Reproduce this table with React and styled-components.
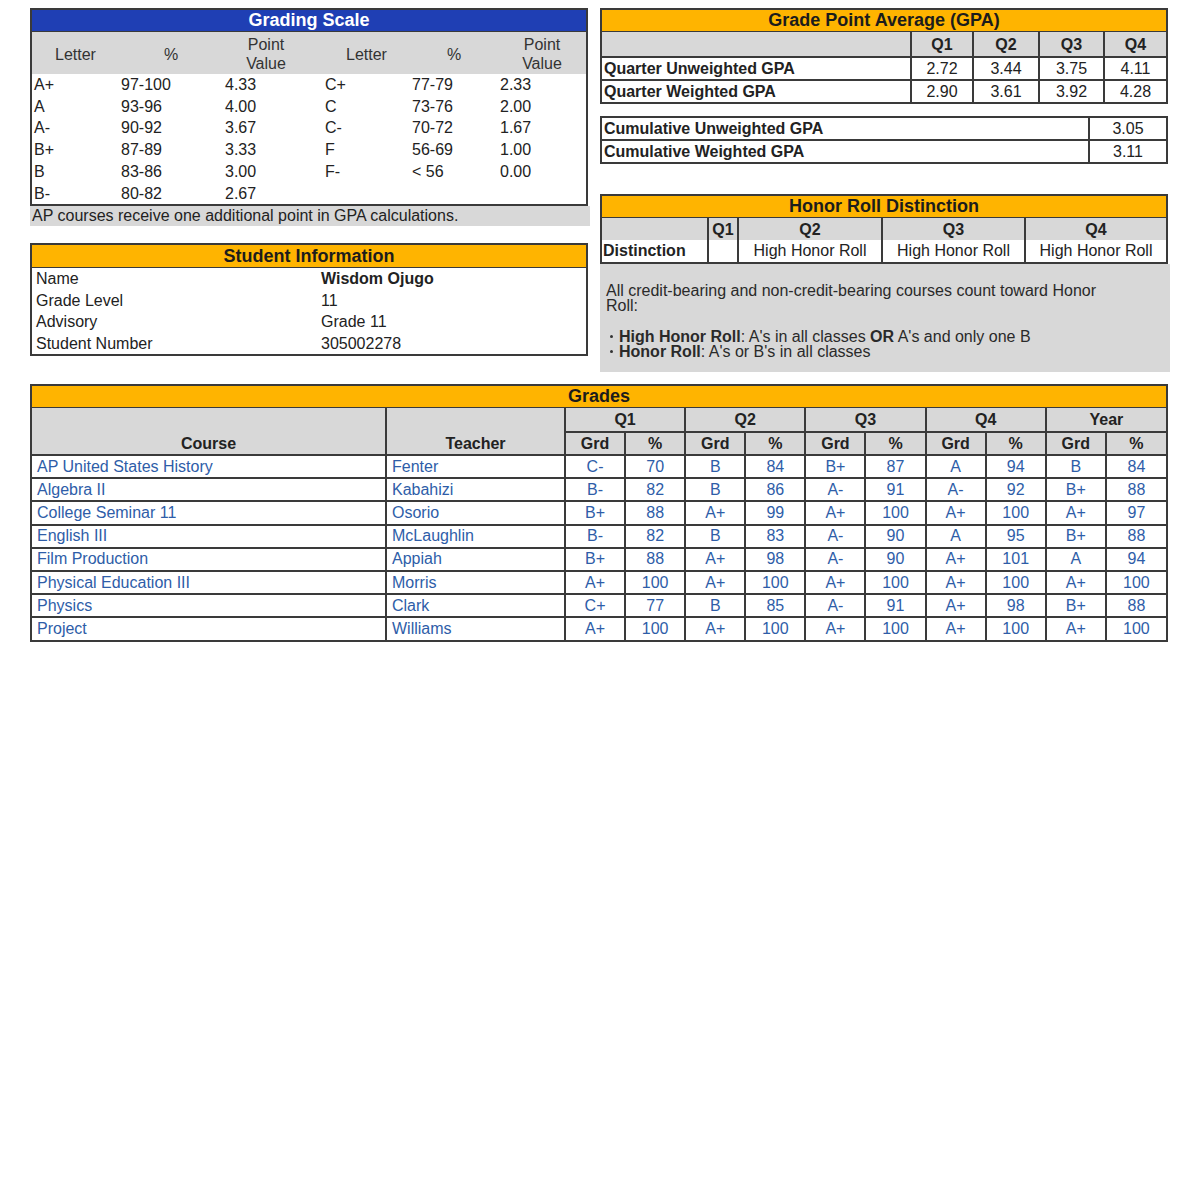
import React from "react";
import styled, { createGlobalStyle } from "styled-components";

const GlobalStyle = createGlobalStyle`
  body {
    margin: 0;
    background: #fff;
    font-family: "Liberation Sans", Arial, sans-serif;
    color: #222;
  }
`;

const LINE = "#3a3a3a";
const GRAY = "#d8d8d8";
const BLUE_TEXT = "#2e5da8";

const Page = styled.div`
  width: 1138px;
  padding: 8px 0 40px 30px;
`;

const TopGrid = styled.div`
  display: grid;
  grid-template-columns: 558px 568px;
  column-gap: 12px;
  align-items: start;
`;

const Column = styled.div`
  display: flex;
  flex-direction: column;
`;

const Box = styled.div`
  border: 2px solid ${LINE};
  background: #fff;
  margin-top: ${(p) => p.$gap || 0}px;
`;

const TitleBar = styled.div`
  height: ${(p) => p.$h || 21}px;
  line-height: ${(p) => p.$h || 21}px;
  background: ${(p) => (p.$tone === "blue" ? "#1f3fb4" : "#ffb400")};
  color: ${(p) => (p.$tone === "blue" ? "#fff" : "#1c1c1c")};
  border-bottom: 1px solid ${LINE};
  text-align: center;
  font-weight: bold;
  font-size: 18px;
`;

const Table = styled.table`
  width: 100%;
  border-collapse: collapse;
  table-layout: fixed;
  font-size: 16px;
`;

/* grading scale */
const ScaleHead = styled.th`
  background: ${GRAY};
  height: 40px;
  font-weight: normal;
  line-height: 19px;
  color: #333;
  padding: 2px ${(p) => p.$pr || 0}px 0 0;
`;

const ScaleCell = styled.td`
  height: 21.7px;
  line-height: 21.7px;
  padding: 0 0 0 2px;
  white-space: nowrap;
`;

const NoteStrip = styled.div`
  width: 560px;
  height: 20px;
  line-height: 20px;
  background: ${GRAY};
  padding-left: 2px;
  font-size: 16px;
  box-sizing: border-box;
`;

/* student info */
const InfoCell = styled.td`
  height: 21.5px;
  line-height: 21.5px;
  padding: 0 0 0 4px;
  font-weight: ${(p) => (p.$bold ? "bold" : "normal")};
`;

/* bordered grid tables */
const GridHead = styled.th`
  background: ${GRAY};
  height: ${(p) => p.$h || 22}px;
  padding: 0;
  font-weight: bold;
  text-align: center;
  vertical-align: ${(p) => (p.$bottom ? "bottom" : "middle")};
  line-height: 21px;
  border-left: ${(p) => (p.$first ? "none" : `2px solid ${LINE}`)};
  border-top: ${(p) => (p.$top ? `2px solid ${LINE}` : "none")};
`;

const GridCell = styled.td`
  height: ${(p) => p.$h || 21}px;
  padding: 0 ${(p) => p.$pad || 3}px;
  line-height: 20px;
  text-align: ${(p) => p.$align || "center"};
  font-weight: ${(p) => (p.$bold ? "bold" : "normal")};
  color: ${(p) => (p.$link ? BLUE_TEXT : "#222")};
  border-left: ${(p) => (p.$first ? "none" : `2px solid ${LINE}`)};
  border-top: ${(p) => (p.$noTop ? "none" : `2px solid ${LINE}`)};
  white-space: nowrap;
`;

const HonorNote = styled.div`
  width: 570px;
  height: 108px;
  box-sizing: border-box;
  background: ${GRAY};
  padding: 19px 6px 0;
  font-size: 16px;
  line-height: 15px;
  color: #2a2a2a;
`;

const NoteParagraph = styled.p`
  margin: 0 0 16px;
  width: 520px;
`;

const BulletList = styled.ul`
  list-style: none;
  margin: 0;
  padding: 0 0 0 4px;
`;

const Dot = styled.span`
  display: inline-block;
  width: 3px;
  height: 3px;
  border-radius: 50%;
  background: #333;
  vertical-align: middle;
  margin: 0 6px 2px 0;
`;

const GradesBox = styled(Box)`
  margin-top: 12px;
  width: 1138px;
  box-sizing: border-box;
`;

const scaleRows = [
  ["A+", "97-100", "4.33", "C+", "77-79", "2.33"],
  ["A", "93-96", "4.00", "C", "73-76", "2.00"],
  ["A-", "90-92", "3.67", "C-", "70-72", "1.67"],
  ["B+", "87-89", "3.33", "F", "56-69", "1.00"],
  ["B", "83-86", "3.00", "F-", "< 56", "0.00"],
  ["B-", "80-82", "2.67", "", "", ""],
];

const info = [
  ["Name", "Wisdom Ojugo", true],
  ["Grade Level", "11"],
  ["Advisory", "Grade 11"],
  ["Student Number", "305002278"],
];

const gpa = [
  ["Quarter Unweighted GPA", "2.72", "3.44", "3.75", "4.11"],
  ["Quarter Weighted GPA", "2.90", "3.61", "3.92", "4.28"],
];

const grades = [
  ["AP United States History", "Fenter", "C-", "70", "B", "84", "B+", "87", "A", "94", "B", "84"],
  ["Algebra II", "Kabahizi", "B-", "82", "B", "86", "A-", "91", "A-", "92", "B+", "88"],
  ["College Seminar 11", "Osorio", "B+", "88", "A+", "99", "A+", "100", "A+", "100", "A+", "97"],
  ["English III", "McLaughlin", "B-", "82", "B", "83", "A-", "90", "A", "95", "B+", "88"],
  ["Film Production", "Appiah", "B+", "88", "A+", "98", "A-", "90", "A+", "101", "A", "94"],
  ["Physical Education III", "Morris", "A+", "100", "A+", "100", "A+", "100", "A+", "100", "A+", "100"],
  ["Physics", "Clark", "C+", "77", "B", "85", "A-", "91", "A+", "98", "B+", "88"],
  ["Project", "Williams", "A+", "100", "A+", "100", "A+", "100", "A+", "100", "A+", "100"],
];

const GradingScale = () => (
  <>
    <Box>
      <TitleBar $tone="blue">Grading Scale</TitleBar>
      <Table>
        <colgroup>
          <col style={{ width: 87 }} />
          <col style={{ width: 104 }} />
          <col style={{ width: 100 }} />
          <col style={{ width: 87 }} />
          <col style={{ width: 88 }} />
          <col style={{ width: 88 }} />
        </colgroup>
        <thead>
          <tr>
            <ScaleHead>Letter</ScaleHead>
            <ScaleHead>%</ScaleHead>
            <ScaleHead $pr={14}>Point<br />Value</ScaleHead>
            <ScaleHead>Letter</ScaleHead>
            <ScaleHead>%</ScaleHead>
            <ScaleHead>Point<br />Value</ScaleHead>
          </tr>
        </thead>
        <tbody>
          {scaleRows.map((r, i) => (
            <tr key={i}>
              {r.map((c, j) => (
                <ScaleCell key={j}>{c}</ScaleCell>
              ))}
            </tr>
          ))}
        </tbody>
      </Table>
    </Box>
    <NoteStrip>AP courses receive one additional point in GPA calculations.</NoteStrip>
  </>
);

const StudentInfo = () => (
  <Box $gap={17}>
    <TitleBar $h={22}>Student Information</TitleBar>
    <Table>
      <colgroup>
        <col style={{ width: 285 }} />
        <col />
      </colgroup>
      <tbody>
        {info.map(([k, v, bold]) => (
          <tr key={k}>
            <InfoCell>{k}</InfoCell>
            <InfoCell $bold={bold}>{v}</InfoCell>
          </tr>
        ))}
      </tbody>
    </Table>
  </Box>
);

const GpaTable = () => (
  <>
    <Box>
      <TitleBar>Grade Point Average (GPA)</TitleBar>
      <Table>
        <colgroup>
          <col style={{ width: 309 }} />
          <col style={{ width: 62 }} />
          <col style={{ width: 66 }} />
          <col style={{ width: 65 }} />
          <col />
        </colgroup>
        <thead>
          <tr>
            <GridHead $first $h={24} />
            <GridHead $h={24}>Q1</GridHead>
            <GridHead $h={24}>Q2</GridHead>
            <GridHead $h={24}>Q3</GridHead>
            <GridHead $h={24}>Q4</GridHead>
          </tr>
        </thead>
        <tbody>
          {gpa.map((r) => (
            <tr key={r[0]}>
              {r.map((c, j) => (
                <GridCell key={j} $first={j === 0} $bold={j === 0} $align={j === 0 ? "left" : "center"} $pad={j === 0 ? 2 : 3}>
                  {c}
                </GridCell>
              ))}
            </tr>
          ))}
        </tbody>
      </Table>
    </Box>
    <Box $gap={12}>
      <Table>
        <colgroup>
          <col style={{ width: 487 }} />
          <col />
        </colgroup>
        <tbody>
          {[
            ["Cumulative Unweighted GPA", "3.05"],
            ["Cumulative Weighted GPA", "3.11"],
          ].map(([k, v], i) => (
            <tr key={k}>
              <GridCell $first $bold $align="left" $pad={2} $noTop={i === 0}>{k}</GridCell>
              <GridCell $noTop={i === 0}>{v}</GridCell>
            </tr>
          ))}
        </tbody>
      </Table>
    </Box>
    <HonorRoll />
  </>
);

function HonorRoll() {
  return (
    <>
      <Box $gap={30}>
        <TitleBar $h={21}>Honor Roll Distinction</TitleBar>
        <Table>
          <colgroup>
            <col style={{ width: 106 }} />
            <col style={{ width: 30 }} />
            <col style={{ width: 144 }} />
            <col style={{ width: 143 }} />
            <col />
          </colgroup>
          <thead>
            <tr>
              <GridHead $first $h={22} />
              <GridHead $h={22}>Q1</GridHead>
              <GridHead $h={22}>Q2</GridHead>
              <GridHead $h={22}>Q3</GridHead>
              <GridHead $h={22}>Q4</GridHead>
            </tr>
          </thead>
          <tbody>
            <tr>
              <GridCell $first $bold $align="left" $pad={1} $noTop $h={22}>Distinction</GridCell>
              <GridCell $noTop />
              <GridCell $noTop>High Honor Roll</GridCell>
              <GridCell $noTop>High Honor Roll</GridCell>
              <GridCell $noTop>High Honor Roll</GridCell>
            </tr>
          </tbody>
        </Table>
      </Box>
      <HonorNote>
        <NoteParagraph>
          All credit-bearing and non-credit-bearing courses count toward Honor Roll:
        </NoteParagraph>
        <BulletList>
          <li><Dot /><b>High Honor Roll</b>: A's in all classes <b>OR</b> A's and only one B</li>
          <li><Dot /><b>Honor Roll</b>: A's or B's in all classes</li>
        </BulletList>
      </HonorNote>
    </>
  );
}

const Grades = () => (
  <GradesBox>
    <TitleBar>Grades</TitleBar>
    <Table>
      <colgroup>
        <col style={{ width: 354 }} />
        <col style={{ width: 179 }} />
        {Array.from({ length: 10 }).map((_, i) => (
          <col key={i} />
        ))}
      </colgroup>
      <thead>
        <tr>
          <GridHead $first rowSpan={2} $bottom>Course</GridHead>
          <GridHead rowSpan={2} $bottom>Teacher</GridHead>
          {["Q1", "Q2", "Q3", "Q4", "Year"].map((q) => (
            <GridHead key={q} colSpan={2} $h={23}>{q}</GridHead>
          ))}
        </tr>
        <tr>
          {Array.from({ length: 5 }).map((_, i) => (
            <React.Fragment key={i}>
              <GridHead $top $h={21}>Grd</GridHead>
              <GridHead $top $h={21}>%</GridHead>
            </React.Fragment>
          ))}
        </tr>
      </thead>
      <tbody>
        {grades.map((r) => (
          <tr key={r[0]}>
            {r.map((c, j) => (
              <GridCell
                key={j}
                $link
                $h={21.2}
                $first={j === 0}
                $align={j < 2 ? "left" : "center"}
                $pad={j < 2 ? 5 : 2}
              >
                {c}
              </GridCell>
            ))}
          </tr>
        ))}
      </tbody>
    </Table>
  </GradesBox>
);

export default function App() {
  return (
    <>
      <GlobalStyle />
      <Page>
        <TopGrid>
          <Column>
            <GradingScale />
            <StudentInfo />
          </Column>
          <Column>
            <GpaTable />
          </Column>
        </TopGrid>
        <Grades />
      </Page>
    </>
  );
}
